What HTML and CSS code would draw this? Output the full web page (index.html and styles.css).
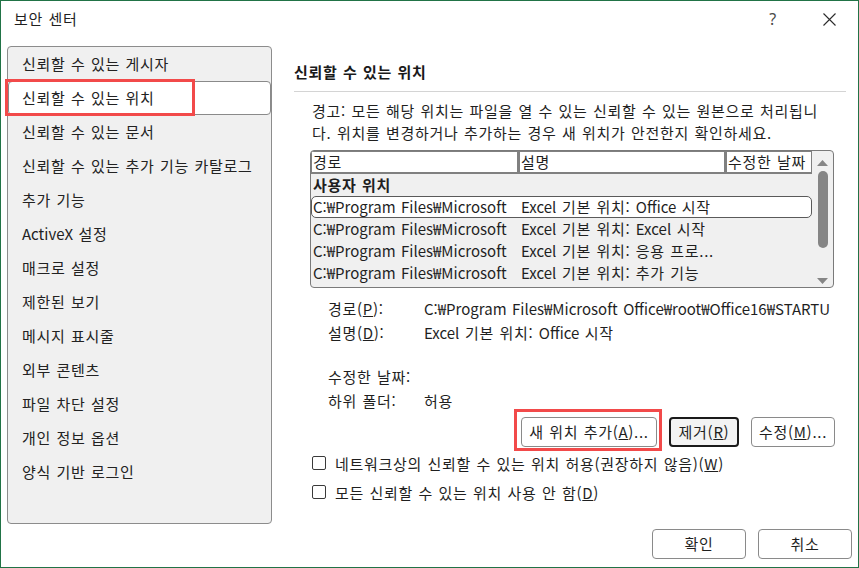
FILE: index.html
```html
<!DOCTYPE html>
<html lang="ko">
<head>
<meta charset="utf-8">
<title>보안 센터</title>
<link rel="stylesheet" href="styles.css">
</head>
<body>
<div class="window">
  <div class="titlebar">
    <span class="title">보안 센터</span>
    <span class="help">?</span>
    <span class="close">
      <svg width="13" height="13" viewBox="0 0 13 13"><path d="M0.5 0.5 L12.5 12.5 M12.5 0.5 L0.5 12.5" stroke="#2b2b2b" stroke-width="1.1" fill="none"/></svg>
    </span>
  </div>
  <div class="main">
    <nav class="sidebar">
      <div class="item">신뢰할 수 있는 게시자</div>
      <div class="item selected">신뢰할 수 있는 위치<span class="mark mark-nav"></span></div>
      <div class="item">신뢰할 수 있는 문서</div>
      <div class="item">신뢰할 수 있는 추가 기능 카탈로그</div>
      <div class="item">추가 기능</div>
      <div class="item"><span class="en">ActiveX</span> 설정</div>
      <div class="item">매크로 설정</div>
      <div class="item">제한된 보기</div>
      <div class="item">메시지 표시줄</div>
      <div class="item">외부 콘텐츠</div>
      <div class="item">파일 차단 설정</div>
      <div class="item">개인 정보 옵션</div>
      <div class="item">양식 기반 로그인</div>
    </nav>
    <section class="content">
      <h2 class="heading">신뢰할 수 있는 위치</h2>
      <div class="rule"></div>
      <p class="warning"><span class="line">경고: 모든 해당 위치는 파일을 열 수 있는 신뢰할 수 있는 원본으로 처리됩니</span><span class="line">다. 위치를 변경하거나 추가하는 경우 새 위치가 안전한지 확인하세요.</span></p>
      <div class="list">
        <div class="table">
          <div class="thead">
            <div class="th th-path">경로</div>
            <div class="th th-desc">설명</div>
            <div class="th th-date">수정한 날짜</div>
          </div>
          <div class="group">사용자 위치</div>
          <div class="row selected-row"><span class="c1 en">C:₩Program Files₩Microsoft</span><span class="c2"><span class="en">Excel</span> 기본 위치: <span class="en">Office</span> 시작</span></div>
          <div class="row"><span class="c1 en">C:₩Program Files₩Microsoft</span><span class="c2"><span class="en">Excel</span> 기본 위치: <span class="en">Excel</span> 시작</span></div>
          <div class="row"><span class="c1 en">C:₩Program Files₩Microsoft</span><span class="c2"><span class="en">Excel</span> 기본 위치: 응용 프로...</span></div>
          <div class="row"><span class="c1 en">C:₩Program Files₩Microsoft</span><span class="c2"><span class="en">Excel</span> 기본 위치: 추가 기능</span></div>
        </div>
        <div class="scrollbar">
          <svg class="arrow-up" width="11" height="6" viewBox="0 0 11 6"><path d="M0 6 L5.5 0 L11 6 Z" fill="#858585"/></svg>
          <div class="thumb"></div>
          <div class="spacer"></div>
          <svg class="arrow-down" width="11" height="6" viewBox="0 0 11 6"><path d="M0 0 L5.5 6 L11 0 Z" fill="#858585"/></svg>
        </div>
      </div>
      <div class="details">
        <div class="drow"><span class="dlabel">경로(<u>P</u>):</span><span class="dvalue en">C:₩Program Files₩Microsoft Office₩root₩Office16₩STARTU</span></div>
        <div class="drow"><span class="dlabel">설명(<u>D</u>):</span><span class="dvalue"><span class="en">Excel</span> 기본 위치: <span class="en">Office</span> 시작</span></div>
        <div class="drow drow-gap"><span class="dlabel">수정한 날짜:</span><span class="dvalue"></span></div>
        <div class="drow"><span class="dlabel">하위 폴더:</span><span class="dvalue">허용</span></div>
      </div>
      <div class="actions">
        <button class="btn btn-add">새 위치 추가(<u>A</u>)...<span class="mark mark-btn"></span></button>
        <button class="btn btn-default btn-remove">제거(<u>R</u>)</button>
        <button class="btn btn-edit">수정(<u>M</u>)...</button>
      </div>
      <label class="check"><span class="box"></span><span>네트워크상의 신뢰할 수 있는 위치 허용(권장하지 않음)(<u>W</u>)</span></label>
      <label class="check check-2"><span class="box"></span><span>모든 신뢰할 수 있는 위치 사용 안 함(<u>D</u>)</span></label>
    </section>
  </div>
  <div class="footer">
    <button class="btn btn-footer">확인</button>
    <button class="btn btn-footer">취소</button>
  </div>
</div>
</body>
</html>
```

FILE: styles.css
```css
* { box-sizing: border-box; }

html, body {
  margin: 0;
  padding: 0;
  background: #ffffff;
}

.window {
  width: 859px;
  height: 568px;
  border: 1px solid #217346;
  background: #ffffff;
  display: flex;
  flex-direction: column;
  font-family: "Noto Sans CJK KR", "Noto Sans", sans-serif;
  font-size: 15px;
  letter-spacing: 0.7px;
  word-spacing: 0.6px;
  color: #1f1f1f;
  overflow: hidden;
}

.en {
  letter-spacing: 0;
  word-spacing: 1.3px;
}

/* title bar */
.titlebar {
  height: 45px;
  display: flex;
  align-items: flex-start;
  padding-top: 8px;
  flex: none;
}
.title {
  flex: 1;
  padding-left: 13px;
  line-height: 20px;
  font-size: 15px;
}
.help {
  width: 16px;
  line-height: 20px;
  text-align: center;
  font-family: "Noto Sans", sans-serif;
  font-size: 16px;
  color: #4a4a4a;
  margin-right: 42px;
}
.close {
  width: 13px;
  height: 13px;
  margin-top: 4px;
  margin-right: 22px;
  display: flex;
}

/* main area */
.main {
  display: flex;
  height: 478px;
  flex: none;
}

.sidebar {
  width: 265px;
  height: 478px;
  margin-left: 6px;
  border: 1px solid #8c8c8c;
  border-radius: 4px;
  background: #f0f0f0;
  flex: none;
}
.item {
  height: 34px;
  line-height: 34px;
  padding-left: 14px;
  white-space: nowrap;
  color: #222;
  position: relative;
}
.item.selected {
  background: #ffffff;
  border: 1px solid #8a8a8a;
  border-radius: 4px;
  line-height: 32px;
  padding-left: 13px;
}

.mark {
  position: absolute;
  border: 3px solid #f24a4a;
  pointer-events: none;
}
.mark-nav {
  left: -4px;
  top: -3px;
  width: 190px;
  height: 37px;
}

.content {
  flex: 1;
  margin-left: 22px;
  margin-right: 12px;
  min-width: 0;
}
.heading {
  margin: 15px 0 0 0;
  font-size: 15px;
  font-weight: 700;
  line-height: 22px;
  color: #1a1a1a;
}
.rule {
  height: 1px;
  background: #d4d4d4;
  margin-top: 8px;
}
.warning {
  margin: 8px 0 0 18px;
  line-height: 22px;
}
.warning .line {
  display: block;
  white-space: nowrap;
}

/* list view */
.list {
  margin-top: 6px;
  margin-left: 16px;
  width: 524px;
  height: 138px;
  border: 1px solid #7a7a7a;
  border-radius: 4px;
  background: #f0f0f0;
  display: flex;
  overflow: hidden;
}
.table {
  width: 501px;
  flex: none;
}
.thead {
  display: flex;
  background: #808080;
  padding: 1px 1px 2px 1px;
  gap: 3px;
}
.th {
  background: #ffffff;
  height: 20px;
  line-height: 20px;
  padding-left: 1px;
  white-space: nowrap;
  overflow: hidden;
}
.th-path { width: 205px; }
.th-desc { width: 204px; }
.th-date { width: 84px; }

.group {
  height: 22px;
  line-height: 22px;
  padding-left: 2px;
  font-weight: 700;
}
.row {
  height: 22px;
  line-height: 20px;
  display: flex;
  white-space: nowrap;
  border: 1px solid transparent;
  border-radius: 5px;
}
.row.selected-row {
  background: #ffffff;
  border-color: #5a5a5a;
}
.c1 {
  width: 209px;
  padding-left: 1px;
  overflow: hidden;
  flex: none;
}
.c2 {
  width: 204px;
  overflow: hidden;
  flex: none;
}

.scrollbar {
  width: 21px;
  flex: none;
  display: flex;
  flex-direction: column;
  align-items: center;
}
.arrow-up { margin-top: 9px; }
.thumb {
  width: 10px;
  height: 77px;
  margin-top: 5px;
  background: #858585;
  border-radius: 5px;
}
.spacer { flex: 1; }
.arrow-down { margin-bottom: 3px; }

/* details */
.details {
  margin-top: 9px;
  margin-left: 34px;
  width: 504px;
}
.drow {
  display: flex;
  height: 24px;
  line-height: 24px;
  white-space: nowrap;
}
.drow-gap { margin-top: 20px; }
.dlabel {
  width: 96px;
  flex: none;
}
.dvalue {
  flex: 1;
  overflow: hidden;
}

/* buttons */
.actions {
  display: flex;
  justify-content: flex-end;
  gap: 12px;
  margin-top: 4px;
  padding-right: 11px;
}
.btn {
  position: relative;
  height: 30px;
  border: 1px solid #8a8a8a;
  border-radius: 4px;
  background: #ffffff;
  font-family: inherit;
  font-size: 15px;
  letter-spacing: 0.7px;
  word-spacing: 0.6px;
  color: #1f1f1f;
  padding: 0;
  line-height: 28px;
  white-space: nowrap;
}
.btn-add { width: 136px; }
.btn-remove { width: 70px; }
.btn-edit { width: 84px; }
.btn-default {
  border: 2px solid #1a1a1a;
  background: #f3f3f3;
  line-height: 26px;
}
.mark-btn {
  left: -8px;
  top: -9px;
  width: 148px;
  height: 42px;
}

/* checkboxes */
.check {
  display: flex;
  align-items: center;
  height: 24px;
  margin-top: 4px;
  margin-left: 18px;
  white-space: nowrap;
}
.check-2 { margin-top: 5px; }
.box {
  width: 14px;
  height: 14px;
  border: 1px solid #3a3a3a;
  border-radius: 2px;
  background: #fff;
  margin-right: 9px;
  flex: none;
}

/* footer */
.footer {
  display: flex;
  justify-content: flex-end;
  gap: 12px;
  margin-top: 5px;
  padding-right: 6px;
}
.btn-footer { width: 94px; }
```
